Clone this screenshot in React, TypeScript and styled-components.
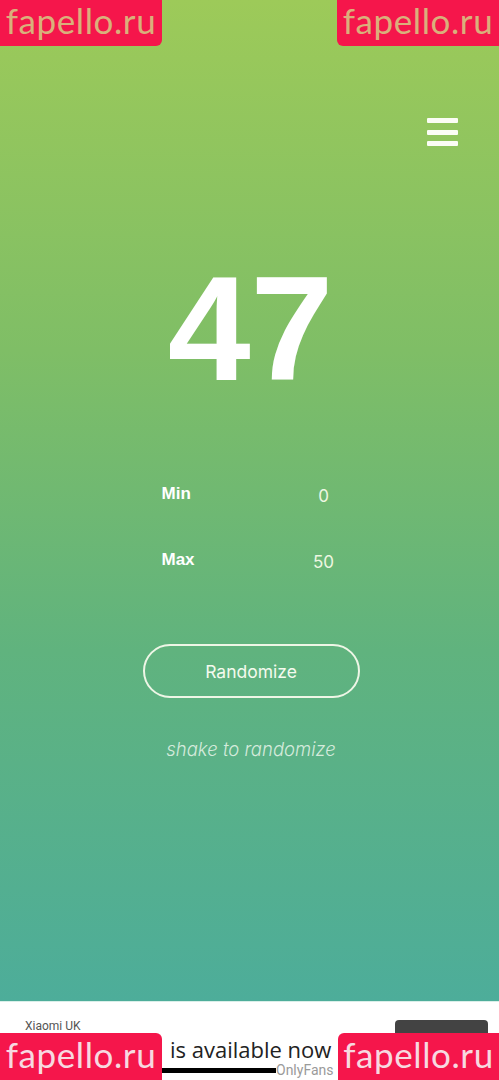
import React from "react";
import styled, { createGlobalStyle, css } from "styled-components";

const Global = createGlobalStyle`
  html, body { margin: 0; padding: 0; }
  body { font-family: "Liberation Sans", Arial, sans-serif; width: 499px; height: 1080px; overflow: hidden; }
`;

const Page = styled.div`
  position: relative;
  width: 499px;
  height: 1080px;
  display: flex;
  flex-direction: column;
  overflow: hidden;
`;

const Screen = styled.main`
  flex: 1;
  display: flex;
  flex-direction: column;
  align-items: center;
  background: linear-gradient(to bottom, #9dca59 0%, #7fbe66 35%, #60b37e 65%, #4dad9a 100%);
`;

const TopBar = styled.header`
  align-self: stretch;
  display: flex;
  justify-content: flex-end;
  padding: 118px 41px 0 0;
`;

const MenuButton = styled.button`
  display: flex;
  flex-direction: column;
  justify-content: space-between;
  width: 31px;
  height: 28px;
  padding: 0;
  border: 0;
  background: none;
`;

const MenuBar = styled.span`
  display: block;
  height: 5px;
  border-radius: 1px;
  background: #fbfdf5;
`;

const BigNumber = styled.div`
  margin-top: 108px;
  font-family: "Liberation Sans", Arial, sans-serif;
  font-weight: 700;
  font-size: 149px;
  line-height: 150px;
  color: #ffffff;
  letter-spacing: 0px;
  padding-left: 2px;
`;

const Settings = styled.div`
  margin-top: 80px;
  width: 182px;
  padding-left: 6px;
  display: flex;
  flex-direction: column;
  gap: 46px;
`;

const Row = styled.div`
  display: flex;
  align-items: center;
  justify-content: space-between;
  height: 20px;
`;

const Label = styled.span`
  font-weight: 700;
  font-size: 17px;
  color: #ffffff;
`;

const Value = styled.span`
  width: 40px;
  text-align: center;
  font-family: "Inter", "Liberation Sans", sans-serif;
  font-size: 17px;
  color: #eef7e2;
  transform: translateY(2px);
`;

const RandomizeButton = styled.button`
  margin-top: 74px;
  width: 217px;
  height: 54px;
  border: 2px solid #eef6e6;
  border-radius: 27px;
  background: transparent;
  color: #f4faee;
  font-family: "Inter", "Liberation Sans", sans-serif;
  font-size: 17.5px;
  font-weight: 400;
  margin-left: 3px;
`;

const Hint = styled.p`
  margin: 40px 0 0;
  font-family: "Inter", "Liberation Sans", sans-serif;
  font-style: italic;
  font-size: 18.5px;
  font-weight: 300;
  color: rgba(235, 246, 236, 0.85);
  padding-left: 3px;
`;

const Ad = styled.footer`
  height: 78px;
  flex: none;
  background: #ffffff;
  border-top: 1px solid #d9efe9;
  position: relative;
  display: flex;
  align-items: flex-start;
  padding: 0 11px 0 25px;
`;

const AdText = styled.div`
  display: flex;
  flex-direction: column;
  flex: 1;
  padding-top: 17px;
`;

const Advertiser = styled.span`
  font-family: "Roboto", "Liberation Sans", sans-serif;
  font-size: 12px;
  color: #555;
`;

const Headline = styled.span`
  margin: 3px 0 0 145px;
  font-family: "Open Sans", "Liberation Sans", sans-serif;
  font-size: 22px;
  color: #222;
  line-height: 26px;
`;

const SourceLine = styled.div`
  display: flex;
  align-items: center;
  margin-left: 137px;
`;

const BlackRule = styled.span`
  display: block;
  width: 114px;
  height: 5px;
  background: #000;
`;

const Source = styled.span`
  font-family: "Roboto", "Liberation Sans", sans-serif;
  font-size: 14px;
  color: #9a9a9a;
`;

const AdButton = styled.div`
  margin-top: 18px;
  width: 93px;
  height: 40px;
  border-radius: 4px;
  background: #434343;
`;

type Corner = "tl" | "tr" | "bl" | "br";

const Mark = styled.div<{ $corner: Corner }>`
  position: absolute;
  width: 162px;
  height: 46px;
  background: #f5164b;
  display: flex;
  align-items: center;
  justify-content: center;
  font-family: "Lato", "Liberation Sans", sans-serif;
  font-weight: 400;
  font-size: 35px;
  letter-spacing: 0.6px;
  line-height: 1;
  padding-bottom: 5px;
  box-sizing: border-box;
  ${({ $corner }) =>
    $corner === "tl"
      ? css`top: 0; left: 0; border-bottom-right-radius: 6px; color: #d9b07b;`
      : $corner === "tr"
      ? css`top: 0; right: 0; border-bottom-left-radius: 6px; color: #d9b07b;`
      : $corner === "bl"
      ? css`bottom: 0; left: 0; height: 47px; border-top-right-radius: 6px; color: #f7d9e0;`
      : css`bottom: 0; right: 0; width: 161px; height: 47px; border-top-left-radius: 6px; color: #f7d9e0;`}
`;

export default function App() {
  return (
    <Page>
      <Global />
      <Screen>
        <TopBar>
          <MenuButton aria-label="menu">
            <MenuBar />
            <MenuBar />
            <MenuBar />
          </MenuButton>
        </TopBar>
        <BigNumber>47</BigNumber>
        <Settings>
          <Row>
            <Label>Min</Label>
            <Value>0</Value>
          </Row>
          <Row>
            <Label>Max</Label>
            <Value>50</Value>
          </Row>
        </Settings>
        <RandomizeButton>Randomize</RandomizeButton>
        <Hint>shake to randomize</Hint>
      </Screen>
      <Ad>
        <AdText>
          <Advertiser>Xiaomi UK</Advertiser>
          <Headline>is available now</Headline>
          <SourceLine>
            <BlackRule />
            <Source>OnlyFans</Source>
          </SourceLine>
        </AdText>
        <AdButton />
      </Ad>
      <Mark $corner="tl">fapello.ru</Mark>
      <Mark $corner="tr">fapello.ru</Mark>
      <Mark $corner="bl">fapello.ru</Mark>
      <Mark $corner="br">fapello.ru</Mark>
    </Page>
  );
}
